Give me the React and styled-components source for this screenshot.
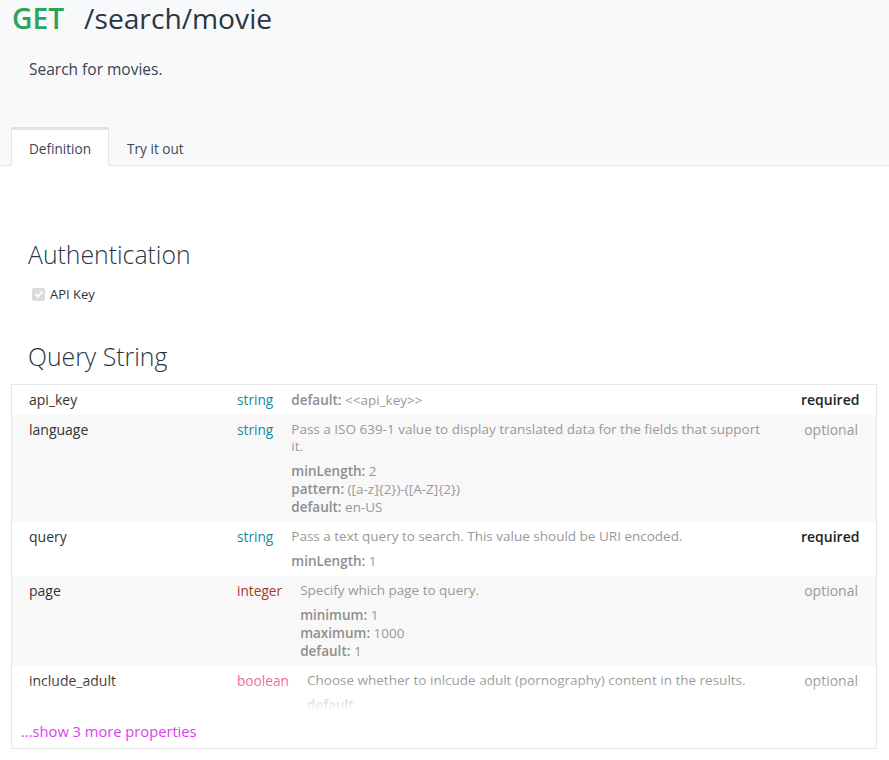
import React from "react";
import styled, { createGlobalStyle } from "styled-components";

const Global = createGlobalStyle`
  html, body { margin: 0; padding: 0; background: #fff; }
  body { font-family: "Open Sans", "Liberation Sans", sans-serif; color: #333; }
  * { box-sizing: border-box; }
`;

const Header = styled.header`
  background: #f8f9fb;
  border-bottom: 1px solid #e6e7e9;
`;

const Title = styled.h1`
  margin: 0;
  padding: 0 12px;
  font-size: 28.2px;
  line-height: 36px;
  font-weight: 400;
  color: #2b3542;
  display: flex;
  gap: 20px;
`;

const Method = styled.span`
  color: #2aa55d;
  font-weight: 600;
`;

const Summary = styled.p`
  margin: 0;
  padding: 22px 29px 0;
  font-size: 15.5px;
  line-height: 22px;
  color: #3a4452;
`;

const Tabs = styled.div`
  display: flex;
  padding: 47px 11px 0;
  margin-bottom: -1px;
`;

const Tab = styled.div`
  padding: 1px 17px 0;
  height: 39px;
  display: flex;
  align-items: center;
  font-size: 13.6px;
  color: #3b4858;
  background: ${(p) => (p.$active ? "#fff" : "transparent")};
  border-top: 3px solid ${(p) => (p.$active ? "#e3e3e3" : "transparent")};
  border-left: 1px solid ${(p) => (p.$active ? "#e3e3e3" : "transparent")};
  border-right: 1px solid ${(p) => (p.$active ? "#e3e3e3" : "transparent")};
  border-bottom: 1px solid ${(p) => (p.$active ? "#fff" : "transparent")};
`;

const Content = styled.main`
  padding: 0 12px 0 11px;
`;

const SectionTitle = styled.h2`
  margin: 0;
  padding: 0 17px;
  font-size: 24.8px;
  font-weight: 300;
  line-height: 32px;
  color: #2b3542;
  margin-top: ${(p) => p.$top}px;
`;

const AuthRow = styled.label`
  display: flex;
  align-items: center;
  gap: 5px;
  padding: 15px 21px 0;
  font-size: 13px;
  color: #2b3542;
`;

const Check = styled.span`
  width: 13px;
  height: 13px;
  border-radius: 2px;
  background: #dcdcdc;
  display: inline-flex;
  align-items: center;
  justify-content: center;
`;

const Table = styled.div`
  margin-top: 12px;
  border: 1px solid #e8e8e8;
`;

const RowsWrap = styled.div`
  position: relative;
  max-height: 329px;
  overflow: hidden;
`;

const Fade = styled.div`
  position: absolute;
  left: 0;
  right: 0;
  bottom: 0;
  height: 34px;
  background: linear-gradient(rgba(255, 255, 255, 0), #fff 90%);
`;

const Row = styled.div`
  display: flex;
  align-items: flex-start;
  padding: 6px 18px 6px 17px;
  background: ${(p) => (p.$alt ? "#f8f8f8" : "#fff")};
  font-size: 14px;
  line-height: 18px;
`;

const Name = styled.div`
  width: 208px;
  flex: none;
  color: #333;
`;

const typeColors = {
  string: "#1a8b98",
  integer: "#a8382c",
  boolean: "#ef5f9d",
};

const Type = styled.div`
  flex: none;
  padding-right: 18px;
  font-size: 13.7px;
  color: ${(p) => typeColors[p.$t]};
`;

const Desc = styled.div`
  flex: 1;
  min-width: 0;
  color: #999;
  font-size: 13.5px;
  padding-right: 30px;
`;

const DescText = styled.div`
  line-height: 17px;
  margin-bottom: 7px;
`;

const Val = styled.div`
  line-height: 18px;
  color: #999;
`;

const Key = styled.b`
  font-weight: 600;
  color: #8e8e8e;
`;

const Req = styled.div`
  flex: none;
  width: 57px;
  text-align: right;
  color: ${(p) => (p.$req ? "#222" : "#999")};
  font-weight: ${(p) => (p.$req ? 600 : 400)};
`;

const ShowMore = styled.div`
  padding: 8px 9px 7px;
  font-size: 14.7px;
  line-height: 19px;
  color: #d83ff0;
`;

const params = [
  {
    name: "api_key",
    type: "string",
    desc: null,
    vals: [["default:", "<<api_key>>"]],
    req: true,
  },
  {
    name: "language",
    type: "string",
    desc: "Pass a ISO 639-1 value to display translated data for the fields that support it.",
    vals: [
      ["minLength:", "2"],
      ["pattern:", "([a-z]{2})-([A-Z]{2})"],
      ["default:", "en-US"],
    ],
  },
  {
    name: "query",
    type: "string",
    desc: "Pass a text query to search. This value should be URI encoded.",
    vals: [["minLength:", "1"]],
    req: true,
  },
  {
    name: "page",
    type: "integer",
    desc: "Specify which page to query.",
    vals: [
      ["minimum:", "1"],
      ["maximum:", "1000"],
      ["default:", "1"],
    ],
  },
  {
    name: "include_adult",
    type: "boolean",
    desc: "Choose whether to inlcude adult (pornography) content in the results.",
    vals: [["default", ""]],
  },
];

export default function App() {
  return (
    <>
      <Global />
      <Header>
        <Title>
          <Method>GET</Method>
          <span>/search/movie</span>
        </Title>
        <Summary>Search for movies.</Summary>
        <Tabs>
          <Tab $active>Definition</Tab>
          <Tab>Try it out</Tab>
        </Tabs>
      </Header>
      <Content>
        <SectionTitle $top={72}>Authentication</SectionTitle>
        <AuthRow>
          <Check>
            <svg width="10" height="10" viewBox="0 0 10 10">
              <path d="M1.5 5.2 L4 7.6 L8.6 2.4" stroke="#fff" strokeWidth="1.8" fill="none" />
            </svg>
          </Check>
          API Key
        </AuthRow>
        <SectionTitle $top={37}>Query String</SectionTitle>
        <Table>
          <RowsWrap>
            {params.map((p, i) => (
              <Row key={p.name} $alt={i % 2 === 1}>
                <Name>{p.name}</Name>
                <Type $t={p.type}>{p.type}</Type>
                <Desc>
                  {p.desc && <DescText>{p.desc}</DescText>}
                  {p.vals.map(([k, v]) => (
                    <Val key={k}>
                      <Key>{k}</Key> {v}
                    </Val>
                  ))}
                </Desc>
                <Req $req={p.req}>{p.req ? "required" : "optional"}</Req>
              </Row>
            ))}
            <Fade />
          </RowsWrap>
          <ShowMore>...show 3 more properties</ShowMore>
        </Table>
      </Content>
    </>
  );
}
